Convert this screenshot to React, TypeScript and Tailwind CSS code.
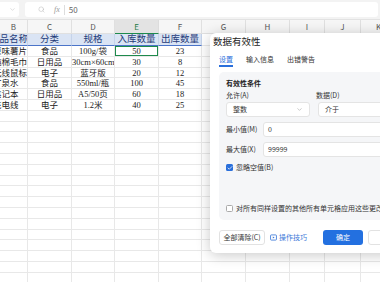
import { Search, ChevronDown, Check } from 'lucide-react';

const COLS = [
  { key: 'B', w: 28 },
  { key: 'C', w: 44 },
  { key: 'D', w: 43 },
  { key: 'E', w: 44 },
  { key: 'F', w: 43 },
  { key: 'G', w: 44 },
  { key: 'H', w: 44 },
  { key: 'I', w: 35 },
  { key: 'J', w: 36 },
  { key: 'K', w: 36 },
];

const HEAD = ['商品名称', '分类', '规格', '入库数量', '出库数量'];

const ROWS = [
  ['原味薯片', '食品', '100g/袋', '50', '23'],
  ['纯棉毛巾', '日用品', '30cm×60cm', '30', '8'],
  ['无线鼠标', '电子', '蓝牙版', '20', '12'],
  ['矿泉水', '食品', '550ml/瓶', '100', '45'],
  ['笔记本', '日用品', 'A5/50页', '60', '18'],
  ['充电线', '电子', '1.2米', '40', '25'],
];

const sheetFont = { fontFamily: '"Liberation Serif", "Noto Sans CJK SC", serif' };
const uiFont = { fontFamily: '"Noto Sans CJK SC", "Noto Sans", sans-serif' };

function DataRow({ cells, idx }: { cells: string[]; idx: number }) {
  return (
    <div className="flex h-[10.8px] text-[8.5px] leading-[10.8px] text-[#222]" style={sheetFont}>
      {COLS.map((c, i) => (
        <div
          key={c.key}
          style={{ width: c.w }}
          className={`relative shrink-0 overflow-hidden whitespace-nowrap border-b border-r border-[#e8e8e8] ${i === 0 ? 'text-left' : 'text-center'}`}
        >
          {i === 0 ? <span className="ml-[-7px] inline-block">{cells[0]}</span> : cells[i] ?? ''}
          {idx === 0 && i === 3 && (
            <div className="absolute inset-0 border-[1.5px] border-[#1e8a4c]" />
          )}
        </div>
      ))}
    </div>
  );
}

function TipIcon() {
  return (
    <svg width="7" height="7" viewBox="0 0 10 10" fill="none" stroke="currentColor" strokeWidth="1.2">
      <rect x="0.8" y="1.3" width="8.4" height="7.4" rx="1" />
      <path d="M4 3.4 L6.6 5 L4 6.6 Z" fill="currentColor" stroke="none" />
    </svg>
  );
}

function Dialog() {
  return (
    <div
      className="absolute left-[210px] top-[33px] h-[220px] w-[200px] rounded-[6px] bg-white shadow-[0_2px_14px_rgba(0,0,0,0.22)]"
      style={uiFont}
    >
      <div className="pl-[3px] pt-[1px] text-[9.5px] leading-[14px] text-[#222]">数据有效性</div>
      <div className="mt-[6.5px] flex gap-[13px] pl-[9px] text-[7px] leading-[9px] text-[#333]">
        <div className="relative text-[#2a6fdb]">
          设置
          <div className="absolute left-0 right-0 top-[10.5px] h-[1.5px] bg-[#2a6fdb]" />
        </div>
        <div>输入信息</div>
        <div>出错警告</div>
      </div>
      <div className="ml-[9px] mt-[8.5px] h-[148px] rounded-[5px] bg-[#f5f6f8] pl-[7px] pt-[6px] text-[7px] text-[#333]">
        <div className="font-bold leading-[10px] text-[#222]">有效性条件</div>
        <div className="mt-[2px] flex leading-[10px]">
          <div className="w-[90px]">允许(A)</div>
          <div>数据(D)</div>
        </div>
        <div className="mt-[2px] flex gap-[8px]">
          <div className="flex h-[15px] w-[84px] items-center justify-between rounded-[3px] border border-[#e4e4e4] bg-white px-[6px]">
            <span>整数</span>
            <ChevronDown size={7} strokeWidth={1.5} className="text-[#888]" />
          </div>
          <div className="flex h-[15px] flex-1 items-center rounded-l-[3px] border border-[#e4e4e4] bg-white px-[6px]">
            介于
          </div>
        </div>
        <div className="mt-[5px] flex h-[15px] items-center">
          <div className="w-[37px]">最小值(M)</div>
          <div className="flex h-full flex-1 items-center rounded-l-[3px] border border-[#e4e4e4] bg-white px-[4px]">0</div>
        </div>
        <div className="mt-[5px] flex h-[15px] items-center">
          <div className="w-[37px]">最大值(X)</div>
          <div className="flex h-full flex-1 items-center rounded-l-[3px] border border-[#e4e4e4] bg-white px-[4px]">99999</div>
        </div>
        <div className="mt-[6px] flex items-center gap-[3px] leading-[9px]">
          <div className="flex h-[7px] w-[7px] items-center justify-center rounded-[1.5px] bg-[#2a6fdb]">
            <Check size={6} strokeWidth={3} className="text-white" />
          </div>
          <span>忽略空值(B)</span>
        </div>
        <div className="mt-[32px] flex items-center gap-[3px] whitespace-nowrap leading-[9px]">
          <div className="h-[7px] w-[7px] shrink-0 rounded-[1.5px] border border-[#aaa] bg-white" />
          <span>对所有同样设置的其他所有单元格应用这些更改</span>
        </div>
      </div>
      <div className="mt-[10px] flex items-center pl-[9px] text-[7px]">
        <div className="flex h-[15px] w-[46px] items-center justify-center rounded-[3px] border border-[#e2e2e2] bg-white text-[#333]">
          全部清除(C)
        </div>
        <div className="ml-[5px] flex items-center gap-[2px] text-[#3a78d8]">
          <TipIcon />
          <span>操作技巧</span>
        </div>
        <div className="ml-[16px] flex h-[15px] w-[40px] items-center justify-center rounded-[3px] bg-[#2370e0] text-white">
          确定
        </div>
        <div className="ml-[5px] flex h-[15px] w-[40px] items-center justify-center rounded-[3px] border border-[#e2e2e2] bg-white text-[#333]">
          取消
        </div>
      </div>
    </div>
  );
}

export default function App() {
  const empty = Array.from({ length: 22 }, () => [] as string[]);
  return (
    <div className="relative h-[282px] w-[380px] overflow-hidden bg-white">
      {/* formula bar */}
      <div className="flex h-[20px] items-center gap-[6px] border-b border-[#e2e2e2] bg-[#f3f3f3] pr-[2px]">
        <div className="flex h-[15px] w-[19px] items-center justify-end rounded-r-[3px] bg-white pr-[3px]">
          <ChevronDown size={7} strokeWidth={1.3} className="text-[#aaa]" />
        </div>
        <div className="flex h-[15px] flex-1 items-center rounded-[3px] bg-white pl-[13px] text-[8px] text-[#555]" style={uiFont}>
          <Search size={7} strokeWidth={1.4} className="text-[#aaa]" />
          <span className="ml-[9px] italic text-[#999]" style={{ fontFamily: '"Liberation Serif", serif' }}>fx</span>
          <div className="ml-[4px] h-[10px] w-px bg-[#ddd]" />
          <span className="ml-[4px] text-[#666]">50</span>
        </div>
      </div>

      {/* column letters */}
      <div className="flex h-[14px] text-[8px] leading-[13px] text-[#555]" style={uiFont}>
        {COLS.map((c) => (
          <div
            key={c.key}
            style={{ width: c.w }}
            className={`shrink-0 border-r text-center ${c.key === 'E' ? 'border-b-[1.5px] border-b-[#1e8a4c] border-r-[#dcdcdc] bg-[#e3e3e3] text-[#1e7a45]' : 'border-b border-[#e0e0e0] bg-[#f6f6f6]'}`}
          >
            {c.key}
          </div>
        ))}
      </div>

      {/* header row */}
      <div className="flex h-[12px] text-[9.5px] leading-[11px] text-[#1f3b78]" style={sheetFont}>
        {COLS.map((c, i) => (
          <div
            key={c.key}
            style={{ width: c.w }}
            className={`shrink-0 overflow-hidden whitespace-nowrap border-b border-r ${i < 5 ? 'border-b-[#4a74c9] border-r-[#c5d3ea] bg-[#dae4f4]' : 'border-b-[#e8e8e8] border-r-[#e8e8e8] bg-white'} ${i === 0 ? 'text-left' : 'text-center'}`}
          >
            {i === 0 ? <span className="ml-[-10px] inline-block">{HEAD[0]}</span> : HEAD[i] ?? ''}
          </div>
        ))}
      </div>

      {ROWS.map((r, i) => (
        <DataRow key={i} cells={r} idx={i} />
      ))}
      {empty.map((r, i) => (
        <DataRow key={`e${i}`} cells={r} idx={-1} />
      ))}

      <Dialog />
    </div>
  );
}
